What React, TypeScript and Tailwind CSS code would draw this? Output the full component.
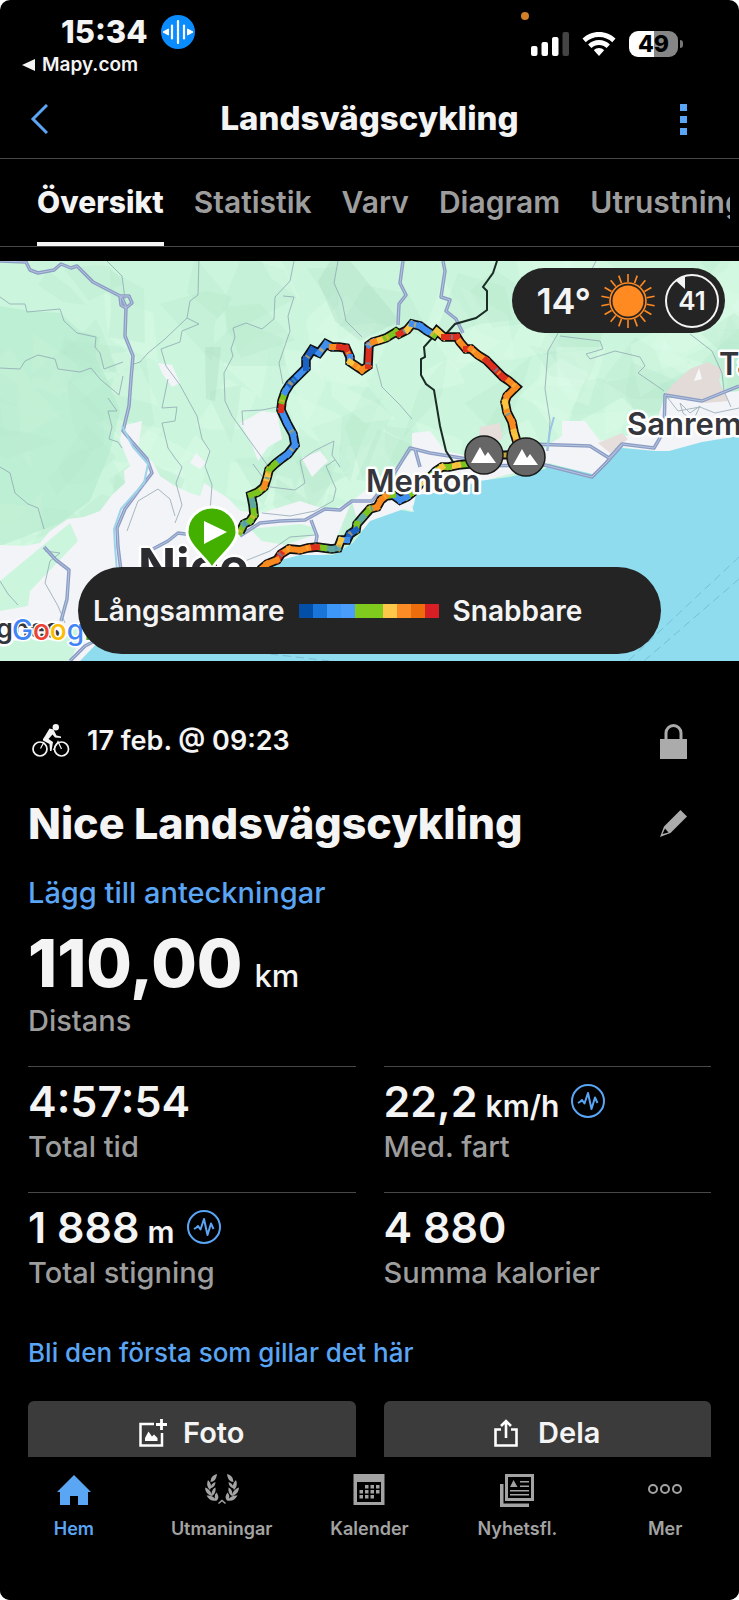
import React from 'react'

// ── Data ───────────────────────────────────────────────────────────────────────

type Point = [number, number, string]

const tabs = ['Översikt', 'Statistik', 'Varv', 'Diagram', 'Utrustning']

const B = '#3f8ff0'
const D = '#1b62c4'
const G = '#7cc41f'
const Y = '#f9c440'
const O = '#f98a1f'
const R = '#dd2f1e'
const C = '#5fa8a0'

// Each point carries the colour of the segment that starts there
const northRoute: Point[] = [
  [240, 271, G], [244, 263, C], [250, 260, G], [254, 254, G], [253, 244, C], [251, 234, G], [258, 231, G],
  [264, 226, O], [267, 217, Y], [269, 209, G], [275, 203, G], [280, 199, B], [288, 193, B], [295, 184, B],
  [293, 173, B], [287, 162, B], [281, 149, R], [282, 140, G], [285, 131, B], [290, 123, D], [298, 115, B],
  [306, 107, D], [306, 98, D], [312, 89, D], [319, 92, B], [326, 83, B], [332, 86, O], [339, 86, R],
  [346, 87, R], [350, 96, B], [350, 101, Y], [356, 105, O], [362, 109, O], [368, 105, R], [369, 84, B],
  [373, 81, O], [380, 79, Y], [386, 77, G], [396, 71, G], [399, 73, R], [407, 69, Y], [412, 63, B],
  [420, 65, B], [427, 70, B], [434, 74, G], [437, 70, Y], [444, 76, R], [457, 76, R], [460, 81, O],
  [466, 88, R], [471, 88, O], [478, 94, O], [486, 99, R], [494, 107, R], [503, 116, R], [509, 120, O],
  [516, 126, O], [507, 135, O], [505, 141, Y], [507, 151, O], [512, 161, O], [514, 171, Y], [517, 181, O],
  [519, 194, O],
]

const coastRoute: Point[] = [
  [478, 203, R], [469, 203, G], [458, 204, Y], [449, 206, G], [442, 206, Y], [436, 210, G], [430, 216, G],
  [421, 222, Y], [413, 231, G], [407, 236, B], [400, 239, B], [393, 234, G], [386, 235, O], [381, 239, O],
  [377, 246, O], [370, 248, G], [363, 256, C], [357, 263, G], [356, 269, D], [350, 273, D], [347, 279, B],
  [341, 279, Y], [338, 287, C], [332, 288, C], [324, 287, G], [317, 286, R], [308, 287, O], [300, 289, O],
  [289, 288, O], [281, 293, R], [277, 299, O], [267, 303, O], [260, 309, R],
]

const speedScale = ['bg-[#034ea6]', 'bg-[#1976d8]', 'bg-[#3d97f7]', 'bg-[#4a9dfb]', 'bg-[#80ca1e]', 'bg-[#80ca1e]', 'bg-[#fdc84a]', 'bg-[#fb8c26]', 'bg-[#ed6c0c]', 'bg-[#d81f26]']

const minorRoads = [
  'M0 36L10 43L25 43L27 51L60 48L64 60L77 72L96 76L95 86L100 92L104 108L123 101',
  'M0 107L20 108L25 100L38 94L55 98L58 108L80 111L91 107L100 118L119 134L123 115',
  'M108 137L117 150L108 150L112 166L109 178L118 181L122 187',
  'M107 0L122 15L125 38',
  'M199 -4L198 34L190 40L187 57L199 63L182 70L180 81L161 88L166 105L180 124L197 155L202 178L210 190L205 205L212 224L210 250',
  'M187 57L165 78L148 92L140 101L134 103',
  'M168 118L162 147L177 146L175 160L162 162L168 187L175 197L182 206L176 222L182 244L175 262',
  'M294 0L290 20L275 36L274 58L262 68L246 62L233 67L235 76L231 88L233 95L224 112L225 140L232 155L268 205',
  'M283 35L294 36L288 55L290 70L279 102L283 123',
  'M243 164L242 150L262 149L277 146',
  'M338 0L334 22L342 40L346 60L362 76',
  'M376 103L382 126L400 144L412 158',
  'M598 -4L590 12L565 60L548 90L545 128L550 160L548 190',
  'M560 75L600 80L603 88L586 93L590 98L615 90L640 96L645 105L638 112L660 127L664 130',
  'M690 73L712 90L722 112L724 130L731 146',
  'M664 132L678 150L700 146L715 152L739 147',
  'M680 142L690 152L700 145L693 160L683 152Z',
  'M0 206L10 212L15 232L28 243L38 247L44 268',
  'M0 320L8 333L18 344',
  'M127 270L138 240L158 228L170 238L175 255',
  'M253 203L270 226L295 229L305 222L300 200',
  'M262 252L290 255L315 250L333 240L336 228L326 205L335 199',
  'M300 200L314 190L334 180L332 194L340 206',
  'M45 290L60 292L50 300L45 322L58 345L65 362',
  'M245 300L270 290L290 276L315 274',
]

const majorRoads = [
  'M0 0L26 1L30 9L38 12L54 9L61 3L71 7L77 5L93 21L120 35',
  'M121 35L126 46L125 75L133 95L131 118L129 145L123 170L133 182L147 198L152 212L142 225L125 248L117 267L118 286L121 310',
  'M120 35L129 35L132 42L126 47L121 44Z',
  'M44 286L56 299L69 309L67 338L61 360',
  'M403 0L400 22L406 34L399 43L398 64',
  'M443 0L445 10L441 36L450 39L446 50L456 58L463 72',
  'M153 288L168 280L178 272L200 275',
  'M240 275L260 262L280 260L305 259L325 248L340 249L352 240L372 240L392 216L410 187L430 192L455 196L480 200L530 183L590 185L609 197L622 183L654 187L664 170L665 134L702 140L739 125',
  'M311 259L317 275L315 286M415 188L420 206',
  'M470 205L545 204L592 216L606 202L622 184',
  'M70 400L85 385L110 372',
]

// ── Map ────────────────────────────────────────────────────────────────────────

// Small fixed pseudo-random source so the relief is the same on every render
function relief(count: number) {
  let seed = 41
  const next = () => {
    seed = (seed * 16807) % 2147483647
    return seed / 2147483647
  }
  return Array.from({ length: count }, () => {
    const x = next() * 760
    const y = next() * 340
    const points = [0, 1, 2, 3, 4].map(k => {
      const angle = (k + next() * 0.9) * 1.26
      const r = 6 + next() * 48
      return `${Math.round(x + Math.cos(angle) * r)},${Math.round(y + Math.sin(angle) * r)}`
    })
    return { points: points.join(' '), light: next() > 0.45 }
  })
}

const facets = relief(150)

function Route({ points }: { points: Point[] }) {
  const line = points.map(([x, y]) => `${x},${y}`).join(' ')
  return (
    <g fill="none">
      <polyline points={line} stroke="#111" strokeWidth="9.5" strokeLinejoin="miter" />
      {points.slice(0, -1).map(([x, y, color], i) => (
        <line key={i} x1={x} y1={y} x2={points[i + 1][0]} y2={points[i + 1][1]} stroke={color} strokeWidth="6" strokeLinecap="square" />
      ))}
      <polyline points={line} stroke="#f6b53c" strokeWidth="5" strokeDasharray="2 17 3 31" opacity="0.6" />
      <polyline points={line} stroke="#4d93b8" strokeWidth="5" strokeDasharray="0 9 2 47" opacity="0.7" />
    </g>
  )
}

function ClimbMarker({ x, y }: { x: number; y: number }) {
  return (
    <g transform={`translate(${x} ${y})`}>
      <circle r="19" fill="#666" stroke="#1a1a1a" strokeWidth="1.5" />
      <path d="M-13 8L-4 -8L1 1L4 -3L12 8Z" fill="#fff" />
    </g>
  )
}

function RouteMap() {
  return (
    <svg viewBox="0 0 739 400" preserveAspectRatio="xMidYMid slice" className="block w-full h-full" role="img" aria-label="Karta">
      <rect width="739" height="400" fill="#cbf6dd" />
      {facets.map((f, i) => (
        <polygon key={i} points={f.points} fill={f.light ? '#dffdeb' : '#b6e9ce'} opacity="0.34" />
      ))}
      <path d="M0 45L30 50L60 52L80 70L100 76L95 95L108 120L120 150L110 190L90 240L60 262L0 285Z" fill="#b2e9cc" opacity="0.55" />
      <path d="M330 0L350 0L400 60L360 80L335 60L318 20ZM205 86L221 86L215 140L206 138Z" fill="#abd9c4" opacity="0.35" />

      {/* Built-up areas */}
      <g fill="#f3f4f8">
        <path d="M122 165L142 160L138 190L152 200L160 215L175 225L190 232L200 235L204 222L228 237L240 250L262 252L300 240L330 250L352 240L330 292L255 310L150 350L90 400L60 400L50 370L0 375L0 284L24 285L40 282L50 270L68 258L84 256L100 250L112 234L125 222L124 210L130 205L120 180Z" />
        <path d="M240 162L262 150L277 152L282 178L268 186L258 200L252 184Z" />
        <path d="M158 102L172 104L180 122L172 126L162 112Z" />
        <path d="M190 202L196 192L206 202L200 208Z" />
        <path d="M302 197L320 190L328 200L312 216Z" />
        <path d="M352 240L385 214L400 204L412 190L412 172L430 170L445 190L480 198L540 190L562 175L562 160L585 160L600 180L640 172L655 165L664 138L739 130L739 180L660 192L622 186L596 214L549 202L452 229L401 249L360 270Z" />
      </g>
      <path d="M664 134L672 124L690 108L708 101L722 108L719 120L728 140L705 142Z" fill="#e2dbd8" />
      <path d="M694 120L699 107L702 118Z" fill="#f7f7f8" />
      <path d="M480 166L500 162L503 178L478 184ZM598 182L622 172L628 178L610 192Z" fill="#e6dedb" />
      <path d="M0 320L70 262L78 280L30 330L28 345L0 350ZM45 370L85 368L70 400L0 400L0 385Z" fill="#cbf6dd" />
      <path d="M250 268L300 263L312 266L314 274L285 284L262 280ZM372 222L396 206L400 222L376 238Z" fill="#cbf6dd" />

      {/* Sea */}
      <path d="M739 175L702 181L669 190L656 190L622 187L607 199L596 214L549 203L545 208L509 216L479 220L452 230L416 234L412 251L401 249L370 260L353 282L333 294L300 294L277 300L253 311L180 350L100 379L80 400L739 400Z" fill="#8fdcee" />
      <path d="M400 246L408 236L414 251Z" fill="#f3f4f8" />
      <path d="M739 296L628 400M739 318L644 400M270 393L330 400" fill="none" stroke="#78bdd6" strokeWidth="1" strokeDasharray="8 5" />

      {/* Roads */}
      <g fill="none" stroke="#93a9b5" strokeWidth="1" opacity="0.8">
        {minorRoads.map(d => <path key={d} d={d} />)}
      </g>
      <g fill="none" strokeLinejoin="round">
        {majorRoads.map(d => <path key={d} d={d} stroke="#8c9dc4" strokeWidth="3.5" />)}
        {majorRoads.map(d => <path key={d} d={d} stroke="#b5c4e0" strokeWidth="1" />)}
        <path d="M122 165L133 186L148 203L144 222L121 248L114 268L115 286L117 310" stroke="#9fd3ea" strokeWidth="2" />
        <path d="M547 190L550 170L554 156" stroke="#9cc3e8" strokeWidth="2" />
      </g>
      <path d="M497 0L493 12L483 26L487 30L487 49L476 57L455 63L444 75M433 76L424 86L425 96L421 98L421 114L426 123L434 129L440 165L446 190L457 207" fill="none" stroke="#1b2c26" strokeWidth="2" />

      <Route points={coastRoute} />
      <Route points={northRoute} />
      <path d="M494 194L514 194" stroke="#111" strokeWidth="9" />
      <path d="M500 194L508 194" stroke="#c4a83a" strokeWidth="5" />

      {/* Place names */}
      <g fontFamily="Inter, sans-serif" fill="#35363c" stroke="#fff" paintOrder="stroke" strokeLinejoin="round">
        <g fontSize="31" fontWeight="600" strokeWidth="5">
          <text x="366" y="231">Menton</text>
          <text x="627" y="174">Sanremo</text>
          <text x="719" y="114">Taggia</text>
        </g>
        <text x="-4" y="377" fontSize="27" fontWeight="600" strokeWidth="5">gnes</text>
        <text x="138" y="323" fontSize="50" fontWeight="700" strokeWidth="5" fill="#2b2c30">Nice</text>
      </g>

      {/* Start pin */}
      <path d="M212 308C208 298 187 285 187 271A25 25 0 1 1 237 271C237 285 216 298 212 308Z" fill="#43b000" stroke="#fff" strokeWidth="3" />
      <path d="M204 260L227 271L204 283Z" fill="#fff" />

      <ClimbMarker x={484} y={194} />
      <ClimbMarker x={526} y={196} />

      {/* Map provider */}
      <text x="12" y="379" fontFamily="Inter, sans-serif" fontSize="28" fontWeight="500" stroke="#fff" strokeWidth="3" paintOrder="stroke">
        <tspan fill="#4285f4">G</tspan>
        <tspan fill="#ea4335">o</tspan>
        <tspan fill="#fbbc04">o</tspan>
        <tspan fill="#4285f4">g</tspan>
        <tspan fill="#34a853">l</tspan>
      </text>
    </svg>
  )
}

// ── Icons ──────────────────────────────────────────────────────────────────────

function VoiceIcon() {
  return (
    <svg width="34" height="34" viewBox="0 0 34 34">
      <circle cx="17" cy="17" r="17" fill="#0a8cff" />
      <path d="M11 10.500V23.500M17 6V28M23 10.500V23.500" stroke="#fff" strokeWidth="2.200" strokeLinecap="round" />
      <path d="M2 17L7.500 14V20ZM32 17L26.500 14V20Z" fill="#fff" stroke="#fff" strokeLinejoin="round" />
    </svg>
  )
}

function SignalIcon() {
  return (
    <svg width="38" height="24" viewBox="0 0 38 24" fill="#fff">
      <rect x="0" y="14" width="6.500" height="10" rx="2" />
      <rect x="10.500" y="10" width="6.500" height="14" rx="2" />
      <rect x="21" y="5" width="6.500" height="19" rx="2" />
      <rect x="31.500" y="0" width="6.500" height="24" rx="2" fill="#444" />
    </svg>
  )
}

function WifiIcon() {
  return (
    <svg width="34" height="24" viewBox="0 0 34 24" fill="#fff">
      <path d="M17 0C23.500 0 29.300 2.500 33.500 6.600L30.300 10.300C26.900 7 22.200 5 17 5S7.100 7 3.700 10.300L0.500 6.600C4.700 2.500 10.500 0 17 0Z" />
      <path d="M17 8C21.200 8 25 9.700 27.900 12.400L24.600 16C22.600 14.100 19.900 13 17 13S11.400 14.100 9.400 16L6.100 12.400C9 9.700 12.800 8 17 8Z" />
      <path d="M17 16C19 16 20.800 16.800 22.100 18.200L17 24L11.900 18.200C13.200 16.800 15 16 17 16Z" />
    </svg>
  )
}

function SunIcon() {
  return (
    <svg width="56" height="56" viewBox="-28 -28 56 56">
      <circle r="15.500" fill="#ff8a22" />
      <circle r="18" fill="none" stroke="#ff8a22" strokeWidth="1.600" />
      {Array.from({ length: 18 }, (_, i) => (
        <path key={i} d="M0 -19V-27" stroke="#ff8a22" strokeWidth="1.600" transform={`rotate(${i * 20})`} />
      ))}
    </svg>
  )
}

function CyclistIcon() {
  return (
    <svg width="38" height="34" viewBox="0 0 38 34" fill="none" stroke="#f4f4f4">
      <circle cx="8" cy="25" r="7" strokeWidth="1.700" />
      <circle cx="29.500" cy="25" r="7" strokeWidth="1.700" />
      <circle cx="23.800" cy="3.200" r="3.200" fill="#f4f4f4" stroke="none" />
      <path d="M17.500 4.500L21.500 5.500L24.500 11.500L29 12.500V14L23 13.500L20.500 10.500L16.500 15L21 18L19.500 27H18L17.500 20L11 16.500C10.500 15 12 13.500 13 12Z" fill="#f4f4f4" stroke="none" />
      <path d="M12 18L8.500 24.500M21.500 26L26 17.500L29.500 25" strokeWidth="1.200" />
    </svg>
  )
}

function LockIcon() {
  return (
    <svg width="27" height="35" viewBox="0 0 27 35" fill="#ababab">
      <path d="M6 17V9A7.500 7.500 0 0 1 21 9V17" fill="none" stroke="#ababab" strokeWidth="3" />
      <rect y="15" width="27" height="20" />
    </svg>
  )
}

function PencilIcon() {
  return (
    <svg width="27" height="27" viewBox="0 0 27 27" fill="#ababab">
      <path fillRule="evenodd" d="M20.500 0L27 6.500L10.500 23L0 27L4 16.500ZM5 18.500L2.500 24L8.500 22.500Z" />
    </svg>
  )
}

function InsightIcon() {
  return (
    <svg width="34" height="34" viewBox="0 0 34 34" fill="none" stroke="#5aa5f4">
      <circle cx="17" cy="17" r="16" strokeWidth="2" />
      <path d="M7 19L9.500 17.500L11 16L13.500 19.500L17 9L20.500 25L24 13.500L26.500 19" strokeWidth="2" strokeLinejoin="round" />
    </svg>
  )
}

function PhotoIcon() {
  return (
    <svg width="28" height="28" viewBox="0 0 28 28" fill="#fff">
      <path d="M15 5H1.500V26.500H23V14" fill="none" stroke="#fff" strokeWidth="2.500" />
      <path d="M22.500 0V11M17 5.500H28" stroke="#fff" strokeWidth="2.800" />
      <path d="M6 22V19L9.500 12.500L13 17.500L15 15.500L18.500 19V22Z" />
    </svg>
  )
}

function ShareIcon() {
  return (
    <svg width="24" height="28" viewBox="0 0 24 28" fill="none" stroke="#fff" strokeWidth="2.600">
      <path d="M7 10.500H1.500V26.500H22.500V10.500H17" />
      <path d="M12 19V2.500M7 7L12 2L17 7" />
    </svg>
  )
}

function HomeIcon() {
  return (
    <svg width="34" height="34" viewBox="0 0 34 34" fill="currentColor">
      <path d="M17 1L34 18H31V31H21V22H13V31H3V18H0Z" />
    </svg>
  )
}

const leaves = 'M12 0C8 1 6 3 5.500 8C9 8 11.500 5 12 0ZM3 6C1.500 10 2 13 5 16C7 12 6 9 3 6ZM10.500 8C7.500 9 5.500 11 5.500 14.500C8.500 13.500 10.500 11.500 10.500 8ZM0 13.500C0.500 18.500 2.500 20.500 7 22C6.500 17.500 4 15 0 13.500ZM10.500 13.500C7.500 15 6 17.500 7 22C10 20 11 17.500 10.500 13.500ZM1.500 21.500C4 26 7 27.500 12 26.500C9 23 6 21 1.500 21.500ZM11.500 18.500C9 21 9 24 11.500 27C14 24.500 14 22 11.500 18.500Z'

function LaurelIcon() {
  return (
    <svg width="34" height="34" viewBox="0 0 34 34" fill="currentColor">
      <path d={leaves} />
      <path d={leaves} transform="matrix(-1 0 0 1 34 0)" />
      <path d="M13.500 29.500L17 26.500L20.500 29.500" fill="none" stroke="currentColor" strokeWidth="1.500" />
    </svg>
  )
}

function CalendarIcon() {
  return (
    <svg width="34" height="34" viewBox="0 0 34 34" fill="currentColor">
      <path fillRule="evenodd" d="M1.500 0H32.500V31H1.500ZM5 8V28H29V8Z" />
      <path d="M13 11H16.500V14.500H13ZM18.500 11H22V14.500H18.500ZM24 11H27.500V14.500H24ZM7.500 16H11V19.500H7.500ZM13 16H16.500V19.500H13ZM18.500 16H22V19.500H18.500ZM24 16H27.500V19.500H24ZM7.500 21H11V24.500H7.500ZM13 21H16.500V24.500H13ZM18.500 21H22V24.500H18.500Z" />
    </svg>
  )
}

function NewsIcon() {
  return (
    <svg width="34" height="34" viewBox="0 0 34 34" fill="currentColor">
      <path fillRule="evenodd" d="M5 0H34V27H5ZM8 3V24H31V3Z" />
      <path d="M0 10H3.500V29.500H29V33H0Z" />
      <path d="M10 13L13.500 6L17.500 13ZM20 7H29V8.500H20ZM20 11.500H29V13H20ZM10 16H29V17.500H10ZM10 20H29V21.500H10Z" />
    </svg>
  )
}

function MoreIcon() {
  return (
    <svg width="34" height="34" viewBox="0 0 34 34" fill="none" stroke="currentColor" strokeWidth="2">
      <circle cx="5" cy="15" r="4" />
      <circle cx="17" cy="15" r="4" />
      <circle cx="29" cy="15" r="4" />
    </svg>
  )
}

// ── Parts ──────────────────────────────────────────────────────────────────────

interface StatProps {
  value: string
  unit?: string
  label: string
  insight?: boolean
}

function Stat({ value, unit, label, insight }: StatProps) {
  return (
    <div className="border-t border-[#484848] pt-[10px] pb-[27px]">
      <div className="flex items-center h-12">
        <p className="text-[43px] leading-[48px] font-semibold whitespace-nowrap">
          {value}
          {unit && <span className="text-[30px] leading-none font-semibold ml-2">{unit}</span>}
        </p>
        {insight && (
          <button aria-label="Visa insikt" className="ml-3">
            <InsightIcon />
          </button>
        )}
      </div>
      <p className="text-[29px] leading-9 mt-1 font-medium text-[#9d9d9d]">{label}</p>
    </div>
  )
}

const navItems = [
  { label: 'Hem', icon: <HomeIcon />, active: true },
  { label: 'Utmaningar', icon: <LaurelIcon /> },
  { label: 'Kalender', icon: <CalendarIcon /> },
  { label: 'Nyhetsfl.', icon: <NewsIcon /> },
  { label: 'Mer', icon: <MoreIcon /> },
]

// ── Page ───────────────────────────────────────────────────────────────────────

export default function App() {
  return (
    <div className="bg-white">
      <div className="relative h-screen flex flex-col overflow-hidden rounded-[10px] bg-black text-[#f4f4f4] font-['Inter',sans-serif]">
        {/* Status bar */}
        <div className="flex justify-between pt-[14px] flex-shrink-0">
          <div>
            <div className="flex items-center gap-[13px] h-9 pl-[61px]">
              <span className="text-[31px] font-extrabold">15:34</span>
              <VoiceIcon />
            </div>
            <a href="#" className="flex items-center gap-[7px] h-[30px] pl-[22px] text-[19px] font-semibold">
              <svg width="13" height="12" viewBox="0 0 13 12" fill="#f4f4f4"><path d="M0 6L13 0V12Z" /></svg>
              Mapy.com
            </a>
          </div>
          <div className="flex items-center h-[60px] pr-14 gap-[13px]">
            <SignalIcon />
            <WifiIcon />
            <div className="flex items-center gap-[2px]">
              <span className="w-[49px] h-[26px] rounded-[9px] bg-linear-to-r from-white from-50% to-[#868686] to-50% text-black text-[23px] leading-[26px] font-extrabold text-center">49</span>
              <span className="w-[3px] h-2 rounded-r-full bg-[#777]" />
            </div>
          </div>
          <span className="absolute top-3 right-[210px] w-2 h-2 rounded-full bg-[#d17f2b]" />
        </div>

        {/* Title bar */}
        <header className="grid grid-cols-[80px_1fr_80px] items-center h-[79px] flex-shrink-0 border-b border-[#484848]">
          <button aria-label="Tillbaka" className="pl-[30px]">
            <svg width="18" height="30" viewBox="0 0 18 30" fill="none" stroke="#5aa5f4" strokeWidth="3"><path d="M17 1L3 15L17 29" /></svg>
          </button>
          <h1 className="text-[33px] font-extrabold text-center">Landsvägscykling</h1>
          <button aria-label="Fler val" className="flex flex-col items-center gap-[5px] pr-8">
            <span className="w-[7px] h-[7px] bg-[#5aa5f4]" />
            <span className="w-[7px] h-[7px] bg-[#5aa5f4]" />
            <span className="w-[7px] h-[7px] bg-[#5aa5f4]" />
          </button>
        </header>

        {/* Tabs */}
        <nav className="flex-shrink-0 border-b border-[#484848] pl-[37px] pr-[9px]">
          <div className="flex gap-[30px] h-[87px] overflow-hidden">
            {tabs.map((tab, i) => (
              <button
                key={tab}
                className={`flex-shrink-0 text-[30px] ${i === 0 ? 'font-extrabold border-b-4 border-[#f4f4f4] pt-1' : 'font-semibold text-[#9d9d9d]'}`}
              >
                {tab}
              </button>
            ))}
          </div>
        </nav>

        <main className="flex-1 min-h-0 overflow-hidden">
          {/* Map */}
          <section className="relative h-[400px] mt-[14px]">
            <RouteMap />
            <div className="absolute top-[7px] right-[14px] h-[65px] pl-6 pr-[6px] flex items-center gap-[9px] rounded-full bg-[#242424]">
              <span className="text-[36px] font-semibold">14°</span>
              <SunIcon />
              <div className="relative w-[54px] h-[54px] rounded-full border-2 border-[#f4f4f4] flex items-center justify-center text-[26px] font-semibold">
                <svg width="12" height="14" viewBox="0 0 12 14" className="absolute top-0 left-2" fill="#f4f4f4"><path d="M0 4L10 0V13Z" /></svg>
                41
              </div>
            </div>
            <div className="absolute bottom-[7px] inset-x-[78px] h-[87px] pl-[15px] flex items-center gap-[14px] rounded-full bg-[#242424] text-[28px] font-semibold">
              <span>Långsammare</span>
              <div className="flex">
                {speedScale.map((color, i) => <span key={i} className={`w-[14px] h-[14px] ${color}`} />)}
              </div>
              <span>Snabbare</span>
            </div>
          </section>

          {/* Summary */}
          <section className="px-7 pt-[60px]">
            <div className="flex items-center justify-between h-10 pl-1 pr-6">
              <div className="flex items-center gap-[17px]">
                <CyclistIcon />
                <p className="text-[27px] font-semibold">17 feb. @ 09:23</p>
              </div>
              <button aria-label="Sekretess"><LockIcon /></button>
            </div>
            <div className="flex items-center justify-between mt-[38px] pr-6">
              <h2 className="text-[43px] leading-[48px] font-extrabold">Nice Landsvägscykling</h2>
              <button aria-label="Redigera"><PencilIcon /></button>
            </div>
            <a href="#" className="block w-fit mt-7 text-[29px] leading-9 font-medium text-[#5aa5f4]">Lägg till anteckningar</a>
            <p className="mt-5 text-[66px] leading-[64px] font-extrabold">
              110,00<span className="text-[31px] leading-none font-medium ml-3">km</span>
            </p>
            <p className="mt-2 text-[29px] leading-9 font-medium text-[#9d9d9d]">Distans</p>

            <div className="grid grid-cols-2 gap-x-7 mt-[27px]">
              <Stat value="4:57:54" label="Total tid" />
              <Stat value="22,2" unit="km/h" label="Med. fart" insight />
              <Stat value="1 888" unit="m" label="Total stigning" insight />
              <Stat value="4 880" label="Summa kalorier" />
            </div>

            <a href="#" className="block w-fit mt-[17px] text-[26px] leading-9 font-medium text-[#5aa5f4]">Bli den första som gillar det här</a>

            <div className="grid grid-cols-2 gap-x-7 mt-[30px]">
              <button className="h-16 flex items-center justify-center gap-4 rounded-md bg-[#3b3b3b] text-[29px] font-semibold">
                <PhotoIcon />
                Foto
              </button>
              <button className="h-16 flex items-center justify-center gap-5 rounded-md bg-[#3b3b3b] text-[29px] font-semibold">
                <ShareIcon />
                Dela
              </button>
            </div>
          </section>
        </main>

        {/* Bottom navigation */}
        <nav className="grid grid-cols-5 h-[143px] pt-[17px] flex-shrink-0 bg-black">
          {navItems.map(({ label, icon, active }) => (
            <a key={label} href="#" className={`flex flex-col items-center gap-[7px] text-[18px] font-semibold ${active ? 'text-[#5aa5f4]' : 'text-[#a3a3a3]'}`}>
              {icon}
              {label}
            </a>
          ))}
        </nav>
      </div>
    </div>
  )
}
